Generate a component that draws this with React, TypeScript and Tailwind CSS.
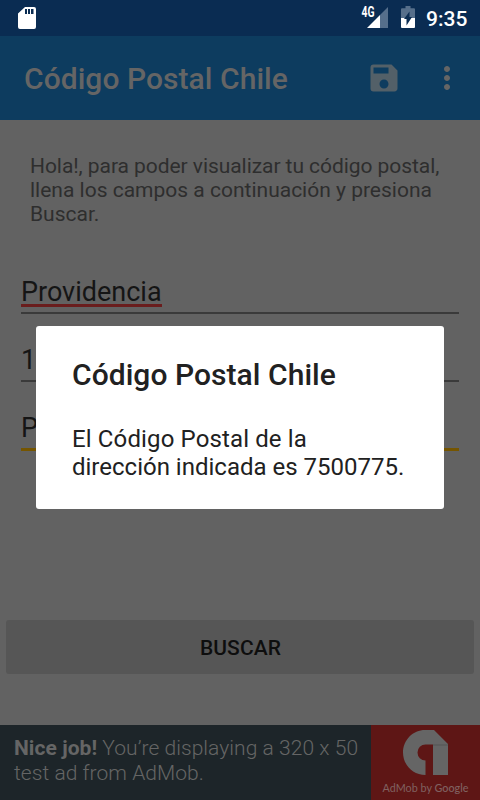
import { MdMoreVert, MdSave } from 'react-icons/md'

function StatusBar() {
  return (
    <div className="flex h-9 shrink-0 items-start bg-[#0a2c52] text-white">
      <svg className="mt-[7px] ml-[18px] h-[22px] w-[18px]" viewBox="0 0 18 22">
        <path fill="currentColor" fillRule="evenodd" d="M7 0h9a2 2 0 0 1 2 2v18a2 2 0 0 1-2 2H2a2 2 0 0 1-2-2V6.500zM7 2v5h2V2zM10 2v5h2V2zM13 2v5h2.500V2z" />
      </svg>
      <div className="ml-auto flex items-start">
        <svg className="mt-[7px] h-[21px] w-[26px] overflow-visible" viewBox="0 0 26 21">
          <path fill="currentColor" d="M5 21 18 8v13z" />
          <path fill="#566f8b" d="M18 8 26 0v21h-8z" />
          <text x="-0.500" y="10" textLength="13" lengthAdjust="spacingAndGlyphs" fill="currentColor" className="font-['Roboto'] text-[14px] font-bold">4G</text>
        </svg>
        <svg className="mt-1.5 ml-[13px] h-[22px] w-3.5" viewBox="0 0 14 22">
          <path fill="#566f8b" d="M4.500 0h5v2.200H13a1 1 0 0 1 1 1V12H0V3.200a1 1 0 0 1 1-1h3.500z" />
          <path fill="currentColor" d="M0 12h14v9a1 1 0 0 1-1 1H1a1 1 0 0 1-1-1z" />
          <path fill="#0a2c52" d="M8.500 5.500v5.500H11L5.500 19.500V13H3z" />
        </svg>
        <span className="mt-[6px] mr-3 ml-[11px] w-[42px] text-[21px] leading-[26px] font-medium whitespace-nowrap">9:35</span>
      </div>
    </div>
  )
}

function Toolbar() {
  return (
    <header className="flex h-[84px] shrink-0 items-center bg-[#0d3c5f] pl-6 text-[#656565]">
      <h1 className="mt-0.5 text-[30px] leading-9 font-medium tracking-[0.05px]">Código Postal Chile</h1>
      <MdSave className="ml-auto size-9 text-[#536068]" />
      <MdMoreVert className="mr-[15px] ml-[27px] size-9" />
    </header>
  )
}

function Form() {
  return (
    <main className="flex grow flex-col">
      <p className="mt-[34px] ml-[30px] text-[21px] leading-6 text-[#2e2e2e]">
        <span className="tracking-[-0.06px]">Hola!, para poder visualizar tu código postal,</span><br />
        llena los campos a continuación y presiona<br />
        Buscar.
      </p>
      <div className="mx-[21px] mt-[46px] flex flex-col text-[27px] leading-8 text-[#151515]">
        <div className="flex h-[42px] items-start border-b-2 border-[#3a3a3a] pt-[4px]">
          <span className="h-[31px] border-b-3 border-[#6a1d1d]">Providencia</span>
        </div>
        <div className="flex h-[68px] items-start border-b-2 border-[#3a3a3a] pt-[30px]">1</div>
        <div className="flex h-[69px] items-start border-b-3 border-[#755500] pt-[30px]">P</div>
      </div>
      <button className="mx-1.5 mt-[169px] h-[54px] rounded-[3px] bg-[#565656] pt-[3px] pl-px text-[21px] font-medium tracking-[0.1px] text-[#0e0e0e]">
        BUSCAR
      </button>
    </main>
  )
}

function AdBanner() {
  return (
    <aside className="flex h-[75px] shrink-0 bg-[#1d2529] text-[#656565]">
      <p className="w-[371px] pt-[11px] pl-3.5 text-[21px] leading-[25px] font-light tracking-[0.05px] whitespace-nowrap">
        <b className="font-bold">Nice job!</b> You’re displaying a 320 x 50<br />
        test ad from AdMob.
      </p>
      <div className="flex grow flex-col items-center bg-[#5e1615]">
        <svg className="mt-[5px] h-[45px] w-[45px]" viewBox="0 0 45 45">
          <path fill="#656565" d="M22 0h9l14 14v31H30V14.500h-7.500a8 8 0 0 0 0 16V45C10 45 0 35 0 22.500S10 0 22 0z" />
          <path fill="none" stroke="#555" d="M30 15h15" />
        </svg>
        <span className="mt-[7px] font-['Lato',sans-serif] text-[10.8px] leading-3 whitespace-nowrap text-[#806160]">
          AdMob by <span className="font-medium">Google</span>
        </span>
      </div>
    </aside>
  )
}

function ResultDialog() {
  return (
    <div role="dialog" className="absolute top-[326px] left-9 h-[183px] w-[408px] rounded-[3px] bg-white px-9 pt-[31px] text-[#212121]">
      <h2 className="text-[30px] leading-9 font-medium tracking-[0.05px]">Código Postal Chile</h2>
      <p className="mt-8 text-2xl leading-7 whitespace-nowrap">
        <span className="tracking-[0.13px]">El Código Postal de la</span><br />
        dirección indicada es 7500775.
      </p>
    </div>
  )
}

export default function App() {
  return (
    <div className="relative flex h-[800px] w-[480px] flex-col overflow-hidden bg-[#626262] font-['Roboto',sans-serif]">
      <StatusBar />
      <Toolbar />
      <Form />
      <AdBanner />
      <ResultDialog />
    </div>
  )
}
